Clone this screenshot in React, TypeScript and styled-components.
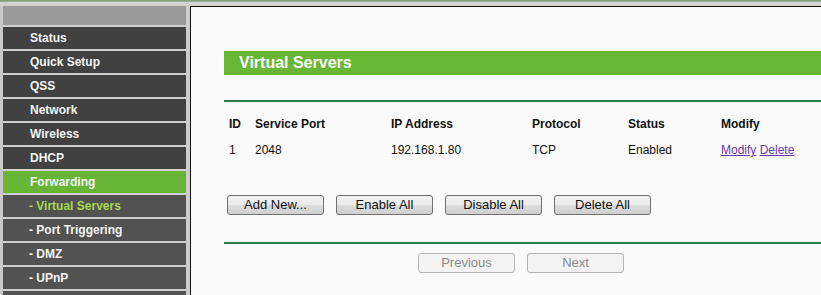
import React from "react";
import styled, { createGlobalStyle } from "styled-components";

const Global = createGlobalStyle`
  html, body { margin: 0; padding: 0; background: #fafafa; }
  body { font-family: "Liberation Sans", Arial, sans-serif; overflow: hidden; }
`;

const Page = styled.div`
  width: 821px;
  height: 295px;
  display: flex;
  flex-direction: column;
  overflow: hidden;
`;

const TopStrip = styled.div`
  height: 6px;
  flex: none;
  background: linear-gradient(to bottom, #7c9a72 0, #9fb597 2px, #d6d6d6 2px, #cfcfcf 6px);
`;

const Body = styled.div`
  display: flex;
  flex: 1;
  min-height: 0;
`;

const Sidebar = styled.nav`
  width: 183px;
  flex: none;
  border-left: 3px solid #c9c9c9;
  border-right: 4px solid #cdcdcd;
  display: flex;
  flex-direction: column;
  background: #d0d0d0;
  gap: 2px;
`;

const SideTop = styled.div`
  height: 19px;
  background: #9a9a9a;
  flex: none;
  margin-top: 0;
`;

const MenuItem = styled.div<{ $sub?: boolean; $active?: boolean; $current?: boolean }>`
  height: 22px;
  flex: none;
  display: flex;
  align-items: center;
  padding-left: ${(p) => (p.$sub ? 26 : 27)}px;
  font-size: 12px;
  font-weight: bold;
  color: ${(p) => (p.$current ? "#a6d94e" : "#f4f4f4")};
  background: ${(p) => (p.$active ? "#66b535" : p.$sub ? "#525252" : "#414141")};
`;

const Content = styled.main`
  flex: 1;
  border-left: 1px solid #111;
  border-top: 1px solid #111;
  background: #fafafa;
  padding: 44px 0 0 33px;
  display: flex;
  flex-direction: column;
`;

const TitleBar = styled.div`
  height: 24px;
  background: #67b735;
  color: #fafafa;
  font-size: 16px;
  font-weight: bold;
  display: flex;
  align-items: center;
  padding-left: 15px;
`;

const Rule = styled.div<{ $top: number }>`
  height: 2px;
  background: #2f7a4e;
  margin-top: ${(p) => p.$top}px;
`;

const Table = styled.div`
  display: grid;
  grid-template-columns: 26px 136px 141px 96px 93px 1fr;
  padding-left: 5px;
  margin-top: 14px;
  row-gap: 10px;
  font-size: 12px;
  color: #111;
`;

const Head = styled.div`
  font-weight: bold;
  height: 16px;
  line-height: 16px;
`;

const Cell = styled.div`
  height: 16px;
  line-height: 16px;
`;

const Link = styled.a`
  color: #6a39a8;
  text-decoration: underline;
  cursor: pointer;
`;

const ButtonRow = styled.div<{ $left: number; $top: number }>`
  display: flex;
  gap: 12px;
  padding-left: ${(p) => p.$left}px;
  margin-top: ${(p) => p.$top}px;
`;

const Btn = styled.button<{ $disabled?: boolean }>`
  width: 97px;
  height: 20px;
  padding: 0;
  font-family: "Liberation Sans", Arial, sans-serif;
  font-size: 13px;
  color: ${(p) => (p.$disabled ? "#8a8a8a" : "#111")};
  border: 1px solid ${(p) => (p.$disabled ? "#b4b4b4" : "#707070")};
  border-radius: 3px;
  background: ${(p) =>
    p.$disabled
      ? "#f3f3f3"
      : "linear-gradient(to bottom, #f2f2f2 0%, #ebebeb 50%, #dddddd 51%, #cfcfcf 100%)"};
  line-height: 18px;
`;

const menu = [
  { label: "Status" },
  { label: "Quick Setup" },
  { label: "QSS" },
  { label: "Network" },
  { label: "Wireless" },
  { label: "DHCP" },
  { label: "Forwarding", active: true },
  { label: "- Virtual Servers", sub: true, current: true },
  { label: "- Port Triggering", sub: true },
  { label: "- DMZ", sub: true },
  { label: "- UPnP", sub: true },
  { label: "", sub: true },
];

export default function App() {
  return (
    <Page>
      <Global />
      <TopStrip />
      <Body>
        <Sidebar>
          <SideTop />
          {menu.map((m, i) => (
            <MenuItem key={i} $sub={m.sub} $active={m.active} $current={m.current}>
              {m.label}
            </MenuItem>
          ))}
        </Sidebar>
        <Content>
          <TitleBar>Virtual Servers</TitleBar>
          <Rule $top={25} />
          <Table>
            <Head>ID</Head>
            <Head>Service Port</Head>
            <Head>IP Address</Head>
            <Head>Protocol</Head>
            <Head>Status</Head>
            <Head>Modify</Head>
            <Cell>1</Cell>
            <Cell>2048</Cell>
            <Cell>192.168.1.80</Cell>
            <Cell>TCP</Cell>
            <Cell>Enabled</Cell>
            <Cell>
              <Link>Modify</Link> <Link>Delete</Link>
            </Cell>
          </Table>
          <ButtonRow $left={3} $top={37}>
            <Btn>Add New...</Btn>
            <Btn>Enable All</Btn>
            <Btn>Disable All</Btn>
            <Btn>Delete All</Btn>
          </ButtonRow>
          <Rule $top={27} />
          <ButtonRow $left={194} $top={9}>
            <Btn $disabled>Previous</Btn>
            <Btn $disabled>Next</Btn>
          </ButtonRow>
        </Content>
      </Body>
    </Page>
  );
}
